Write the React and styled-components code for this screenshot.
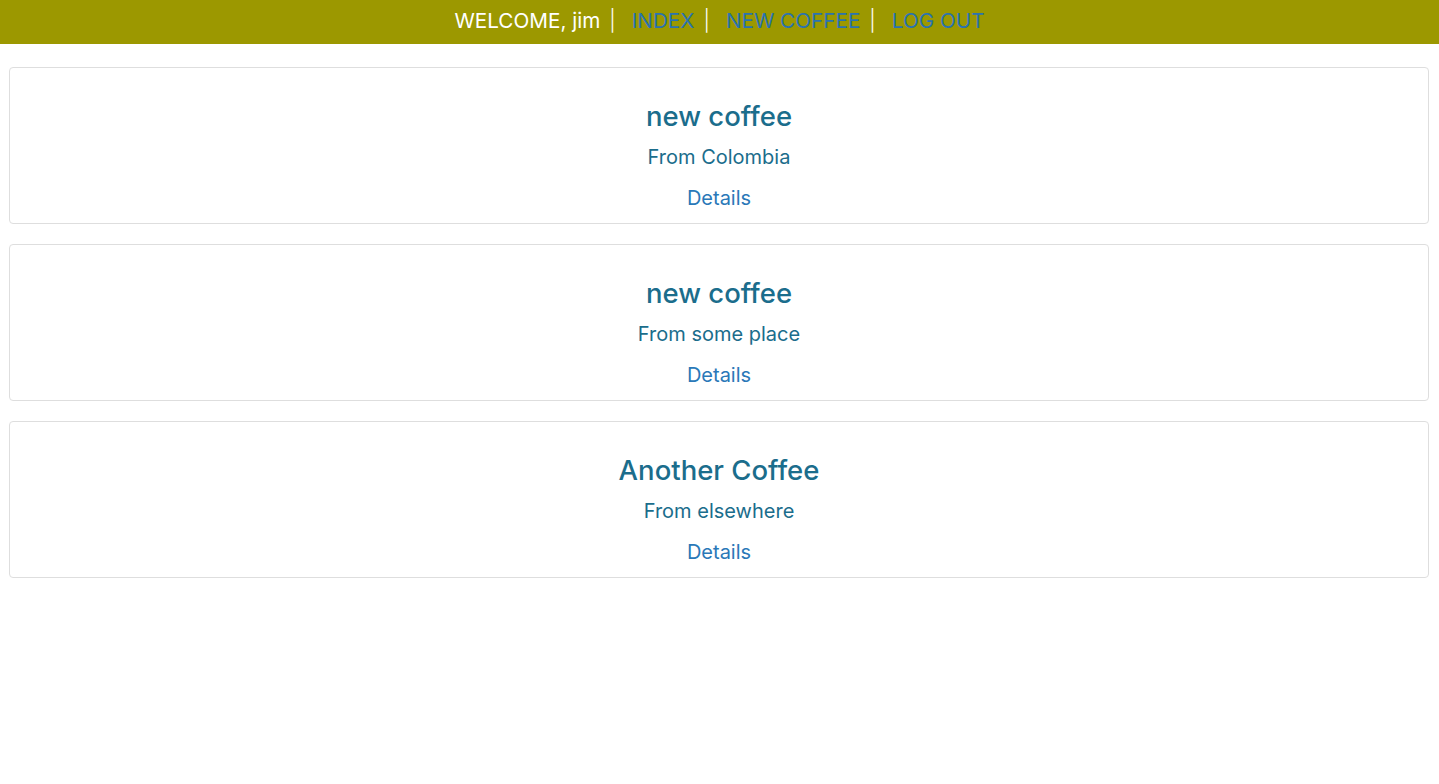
import React from 'react'
import styled, { createGlobalStyle } from 'styled-components'

const coffees = [
    { name: 'new coffee', origin: 'Colombia' },
    { name: 'new coffee', origin: 'some place' },
    { name: 'Another Coffee', origin: 'elsewhere' }
]

const App = () => {
    return (
        <>
            <GlobalStyle />
            <Nav>
                <Welcome>WELCOME, jim</Welcome>
                <Sep>|</Sep>
                <NavLink href="#">INDEX</NavLink>
                <Sep>|</Sep>
                <NavLink href="#">NEW COFFEE</NavLink>
                <Sep>|</Sep>
                <NavLink href="#">LOG OUT</NavLink>
            </Nav>
            <List>
                {coffees.map((c, i) => (
                    <Card key={i}>
                        <Title>{c.name}</Title>
                        <Origin>From {c.origin}</Origin>
                        <Details href="#">Details</Details>
                    </Card>
                ))}
            </List>
        </>
    )
}

const GlobalStyle = createGlobalStyle`
body {
    margin: 0;
    background: #fff;
    font-family: Inter, "Noto Sans", "Liberation Sans", sans-serif;
}
`
const Nav = styled.nav`
height: 44px;
background: #9c9800;
display: flex;
align-items: center;
justify-content: center;
padding-bottom: 3px;
box-sizing: border-box;
font-size: 20.7px;
`
const Welcome = styled.span`
color: #fff;
`
const Sep = styled.span`
color: #fff;
font-weight: 300;
margin: 0 16px 0 9px;
`
const NavLink = styled.a`
color: #2a73b0;
text-decoration: none;
`
const List = styled.main`
display: flex;
flex-direction: column;
gap: 20px;
padding: 23px 10px 0 9px;
`
const Card = styled.div`
border: 1px solid #dedede;
border-radius: 4px;
padding: 31px 0 10px;
display: flex;
flex-direction: column;
align-items: center;
`
const Title = styled.h2`
margin: 0;
font-size: 27.5px;
line-height: 35px;
font-weight: 500;
color: #1b6d8c;
`
const Origin = styled.p`
margin: 8px 0 0;
font-size: 20px;
line-height: 30px;
color: #1b6d8c;
`
const Details = styled.a`
margin-top: 11px;
font-size: 20px;
line-height: 30px;
color: #2a78b8;
text-decoration: none;
`

export default App
